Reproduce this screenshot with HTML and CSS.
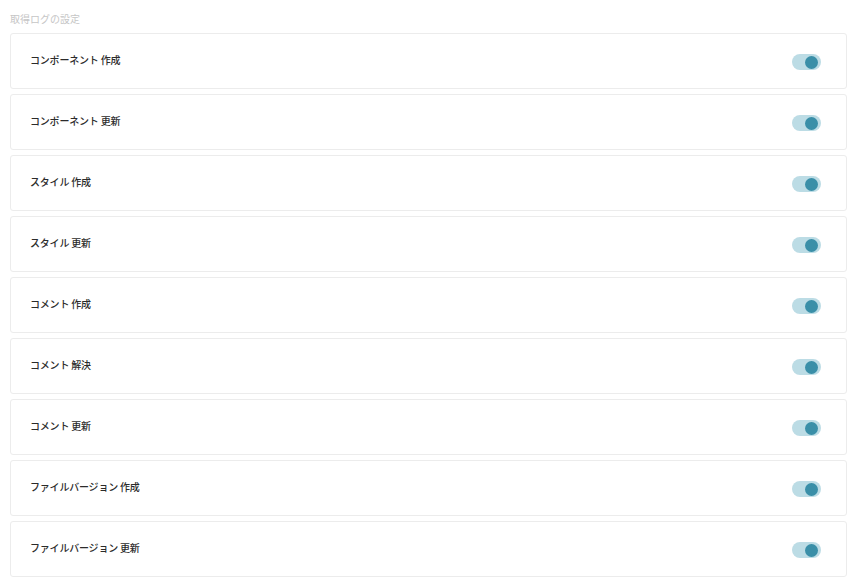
FILE: index.html
```html
<!DOCTYPE html>
<html lang="ja">

<head>
    <meta charset="UTF-8">
    <meta name="viewport" content="width=device-width, initial-scale=1.0">
    <title>取得ログの設定</title>
    <link rel="stylesheet" href="styles.css">
</head>

<body>
    <div class="settings">
        <h2 class="settings-title">取得ログの設定</h2>
        <div class="setting-row">
            <span class="setting-label">コンポーネント 作成</span>
            <label class="toggle"><input type="checkbox" checked><span class="toggle-track"></span></label>
        </div>
        <div class="setting-row">
            <span class="setting-label">コンポーネント 更新</span>
            <label class="toggle"><input type="checkbox" checked><span class="toggle-track"></span></label>
        </div>
        <div class="setting-row">
            <span class="setting-label">スタイル 作成</span>
            <label class="toggle"><input type="checkbox" checked><span class="toggle-track"></span></label>
        </div>
        <div class="setting-row">
            <span class="setting-label">スタイル 更新</span>
            <label class="toggle"><input type="checkbox" checked><span class="toggle-track"></span></label>
        </div>
        <div class="setting-row">
            <span class="setting-label">コメント 作成</span>
            <label class="toggle"><input type="checkbox" checked><span class="toggle-track"></span></label>
        </div>
        <div class="setting-row">
            <span class="setting-label">コメント 解決</span>
            <label class="toggle"><input type="checkbox" checked><span class="toggle-track"></span></label>
        </div>
        <div class="setting-row">
            <span class="setting-label">コメント 更新</span>
            <label class="toggle"><input type="checkbox" checked><span class="toggle-track"></span></label>
        </div>
        <div class="setting-row">
            <span class="setting-label">ファイルバージョン 作成</span>
            <label class="toggle"><input type="checkbox" checked><span class="toggle-track"></span></label>
        </div>
        <div class="setting-row">
            <span class="setting-label">ファイルバージョン 更新</span>
            <label class="toggle"><input type="checkbox" checked><span class="toggle-track"></span></label>
        </div>
    </div>
</body>

</html>
```

FILE: styles.css
```css
body {
    margin: 0;
    background-color: #fff;
    font-family: "Noto Sans CJK JP", "Noto Sans", sans-serif;
    color: #333;
}

.settings {
    padding: 12px 11px 0 10px;
    display: flex;
    flex-direction: column;
    gap: 5px;
}

.settings-title {
    margin: 0 0 2px;
    font-size: 10px;
    line-height: 14px;
    font-weight: 400;
    color: #c6c6c6;
}

.setting-row {
    display: flex;
    justify-content: space-between;
    align-items: center;
    height: 56px;
    box-sizing: border-box;
    padding: 0 25px 0 19px;
    border: 1px solid #ececec;
    border-radius: 3px;
}

.setting-label {
    margin-bottom: 3px;
    font-size: 10px;
    line-height: 14px;
    font-weight: 500;
    letter-spacing: -0.2px;
    color: #2b2b2b;
}

.toggle {
    display: block;
    margin-top: 2px;
}

.toggle input {
    display: none;
}

.toggle-track {
    display: flex;
    align-items: center;
    justify-content: flex-end;
    width: 29px;
    height: 16px;
    box-sizing: border-box;
    padding-right: 3px;
    border-radius: 8px;
    background-color: #bcdce5;
}

.toggle-track::after {
    content: "";
    width: 13px;
    height: 13px;
    border-radius: 50%;
    background-color: #3a8fa8;
}
```
